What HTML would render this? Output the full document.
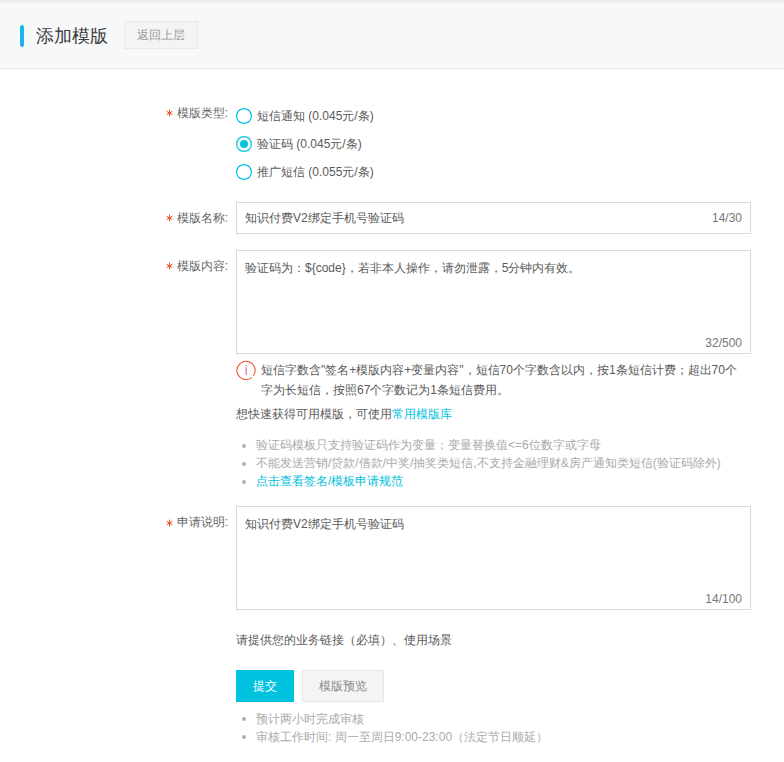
<!DOCTYPE html>
<html><head><meta charset="utf-8">
<style>
*{margin:0;padding:0;box-sizing:border-box}
html,body{width:784px;height:762px;overflow:hidden;background:#fff}
body{font-family:"Liberation Sans",sans-serif;font-size:12px;color:#5a5a5a;position:relative}
.a{position:absolute;white-space:nowrap;line-height:16px}
#hdr{position:absolute;left:0;top:0;width:784px;height:69px;background:#f7f8fa;border-bottom:1px solid #e9e9e9}
#hdr .shadow{position:absolute;left:0;top:0;width:784px;height:4px;background:linear-gradient(#e9eaec,#f7f8fa)}
#bar{position:absolute;left:20px;top:25px;width:4px;height:22px;border-radius:2px;background:linear-gradient(#10c0e0,#2ba7f5)}
#title{position:absolute;left:36px;top:24px;font-size:18px;line-height:24px;color:#3a3a3a}
#back{position:absolute;left:124px;top:21px;width:74px;height:28px;border:1px solid #e9e9e9;background:#f4f4f4;color:#999;font-size:12px;line-height:26px;text-align:center}
.lbl{position:absolute;white-space:nowrap;line-height:16px;color:#666;text-align:right;width:120px}
.lbl b{display:none}
.ast{position:absolute;width:8px;height:8px}
.radio{position:absolute;left:236px;width:16px;height:16px}
.box{position:absolute;left:236px;width:515px;border:1px solid #d8dadd;background:#fff}
.cnt{position:absolute;right:8px;color:#777;font-size:12px;line-height:16px}
.gray{color:#aaa}
.link{color:#00c1de}
.dot{position:absolute;left:242px;width:4px;height:4px;border-radius:50%;background:#aeb2b5}
#submit{position:absolute;left:236px;top:670px;width:58px;height:32px;background:#00c1de;color:#fff;text-align:center;line-height:32px}
#preview{position:absolute;left:302px;top:670px;width:82px;height:32px;background:#f4f4f4;border:1px solid #e7e7e7;color:#888;text-align:center;line-height:30px}
</style></head>
<body>
<div id="hdr"><div class="shadow"></div>
<div id="bar"></div>
<div id="title">添加模版</div>
<div id="back">返回上层</div>
</div>

<svg class="ast" style="left:166px;top:109px" viewBox="0 0 8 8"><g stroke="#e8502a" stroke-width="1" stroke-linecap="round"><line x1="3.5" y1="1" x2="3.5" y2="7"/><line x1="0.9" y1="2.5" x2="6.1" y2="5.5"/><line x1="0.9" y1="5.5" x2="6.1" y2="2.5"/></g></svg><div class="lbl" style="left:108px;top:105px"><b>*</b>模版类型:</div>
<svg class="radio" style="top:108px" viewBox="0 0 16 16"><circle cx="8" cy="8" r="7.4" fill="none" stroke="#00c1de" stroke-width="1.2"/></svg>
<div class="a" style="left:257px;top:108px">短信通知 (0.045元/条)</div>
<svg class="radio" style="top:136px" viewBox="0 0 16 16"><circle cx="8" cy="8" r="7.4" fill="none" stroke="#00c1de" stroke-width="1.2"/><circle cx="8" cy="8" r="4" fill="#00c1de"/></svg>
<div class="a" style="left:257px;top:136px">验证码 (0.045元/条)</div>
<svg class="radio" style="top:164px" viewBox="0 0 16 16"><circle cx="8" cy="8" r="7.4" fill="none" stroke="#00c1de" stroke-width="1.2"/></svg>
<div class="a" style="left:257px;top:164px">推广短信 (0.055元/条)</div>

<svg class="ast" style="left:166px;top:214px" viewBox="0 0 8 8"><g stroke="#e8502a" stroke-width="1" stroke-linecap="round"><line x1="3.5" y1="1" x2="3.5" y2="7"/><line x1="0.9" y1="2.5" x2="6.1" y2="5.5"/><line x1="0.9" y1="5.5" x2="6.1" y2="2.5"/></g></svg><div class="lbl" style="left:108px;top:210px"><b>*</b>模版名称:</div>
<div class="box" style="top:202px;height:32px">
  <div class="a" style="left:8px;top:7px">知识付费V2绑定手机号验证码</div>
  <div class="cnt" style="top:7px">14/30</div>
</div>

<svg class="ast" style="left:166px;top:262px" viewBox="0 0 8 8"><g stroke="#e8502a" stroke-width="1" stroke-linecap="round"><line x1="3.5" y1="1" x2="3.5" y2="7"/><line x1="0.9" y1="2.5" x2="6.1" y2="5.5"/><line x1="0.9" y1="5.5" x2="6.1" y2="2.5"/></g></svg><div class="lbl" style="left:108px;top:258px"><b>*</b>模版内容:</div>
<div class="box" style="top:250px;height:104px">
  <div class="a" style="left:8px;top:9px">验证码为：${code}，若非本人操作，请勿泄露，5分钟内有效。</div>
  <div class="cnt" style="top:84px">32/500</div>
</div>

<svg style="position:absolute;left:236px;top:360px" width="20" height="21" viewBox="0 0 20 21">
<path d="M15.60 17.57 A9.1 9.1 0 1 1 17.36 15.75" fill="none" stroke="#f0532f" stroke-width="1.1"/>
<rect x="9.6" y="5" width="1.1" height="1.3" fill="#ee5a8a"/>
<rect x="9.6" y="7.2" width="1.1" height="7.8" fill="#ee5a8a"/>
</svg>
<div class="a" style="left:261px;top:362px">短信字数含"签名+模版内容+变量内容"，短信70个字数含以内，按1条短信计费；超出70个</div>
<div class="a" style="left:261px;top:382px">字为长短信，按照67个字数记为1条短信费用。</div>
<div class="a" style="left:236px;top:406px">想快速获得可用模版，可使用<span class="link">常用模版库</span></div>

<div class="dot" style="top:444px"></div>
<div class="a gray" style="left:256px;top:437px">验证码模板只支持验证码作为变量；变量替换值&lt;=6位数字或字母</div>
<div class="dot" style="top:462px"></div>
<div class="a gray" style="left:256px;top:455px">不能发送营销/贷款/借款/中奖/抽奖类短信,不支持金融理财&amp;房产通知类短信(验证码除外)</div>
<div class="dot" style="top:480px"></div>
<div class="a link" style="left:256px;top:473px">点击查看签名/模板申请规范</div>

<svg class="ast" style="left:166px;top:519px" viewBox="0 0 8 8"><g stroke="#e8502a" stroke-width="1" stroke-linecap="round"><line x1="3.5" y1="1" x2="3.5" y2="7"/><line x1="0.9" y1="2.5" x2="6.1" y2="5.5"/><line x1="0.9" y1="5.5" x2="6.1" y2="2.5"/></g></svg><div class="lbl" style="left:108px;top:514px"><b>*</b>申请说明:</div>
<div class="box" style="top:506px;height:104px">
  <div class="a" style="left:8px;top:9px">知识付费V2绑定手机号验证码</div>
  <div class="cnt" style="top:84px">14/100</div>
</div>

<div class="a" style="left:236px;top:632px">请提供您的业务链接（必填）、使用场景</div>

<div id="submit">提交</div>
<div id="preview">模版预览</div>

<div class="dot" style="top:717px"></div>
<div class="a gray" style="left:256px;top:711px">预计两小时完成审核</div>
<div class="dot" style="top:735px"></div>
<div class="a gray" style="left:256px;top:729px">审核工作时间: 周一至周日9:00-23:00（法定节日顺延）</div>
</body></html>
